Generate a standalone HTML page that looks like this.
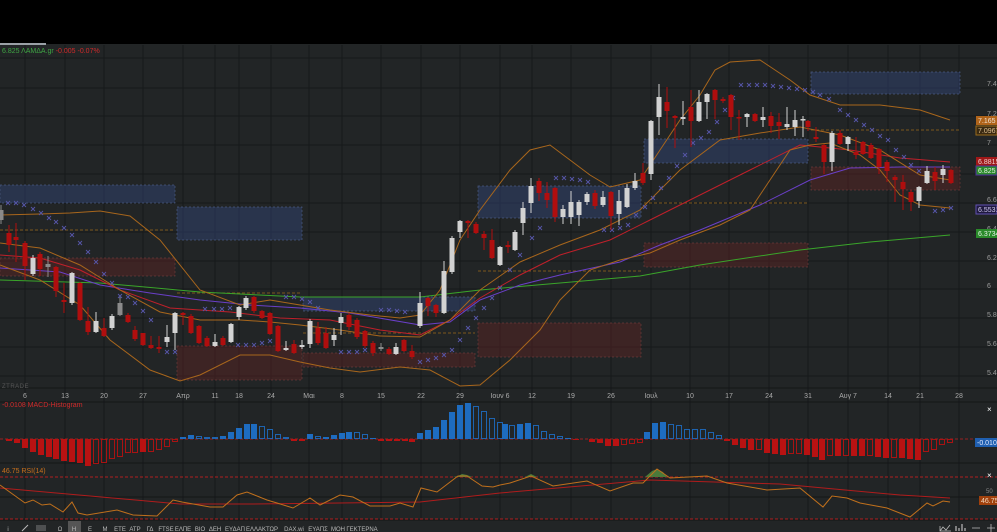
<!DOCTYPE html>
<html><head><meta charset="utf-8"><style>
html,body{margin:0;padding:0;background:#222526;width:997px;height:532px;overflow:hidden}
svg{display:block;font-family:"Liberation Sans","Noto Sans CJK SC",sans-serif}
</style></head><body>
<svg id="s" width="997" height="532" viewBox="0 0 997 532" xmlns="http://www.w3.org/2000/svg">
<rect x="0" y="0" width="997" height="532" fill="#222526"/>
<rect x="0" y="0" width="997" height="44" fill="#000"/>
<rect x="0" y="43" width="46" height="2" fill="#9aa0a6"/>
<g id="grid" stroke="#16191a" stroke-width="1"></g>
<g id="boxes"></g>
<g id="lines" fill="none" stroke-width="1"></g>
<g id="sar" stroke="#5656a8" stroke-width="0.9"></g>
<g id="candles"></g>
<g id="macd"></g>
<g id="rsi" fill="none"></g>
<text x="2" y="53" font-size="7" fill="#3fa544">6.825 ΛΑΜΔΑ.gr <tspan fill="#d02a2a">-0.005 -0.07%</tspan></text>
<text x="2" y="388" font-size="6" fill="#555" letter-spacing="0.5">ZTRADE</text>
<text x="2" y="407" font-size="7" fill="#d02a2a">-0.0108 MACD-Histogram</text>
<text x="2" y="473" font-size="7" fill="#c8701c">46.75 RSI(14)</text>
<g id="axis" font-size="7" fill="#aaa" text-anchor="middle"></g>
<g id="price" font-size="7" fill="#9a9a9a"></g>
<g font-size="7" fill="#fff">
<rect x="976" y="116" width="21" height="9" fill="#b0641a"/><text x="978" y="123" fill="#f0e0d0">7.165</text>
<rect x="976" y="126" width="21" height="9" fill="#3a2a12" stroke="#9a6a1a"/><text x="978" y="133" fill="#e0c090">7.0967</text>
<rect x="976" y="157" width="21" height="9" fill="#a01818"/><text x="978" y="164" fill="#f0d0d0">6.8815</text>
<rect x="976" y="166" width="21" height="9" fill="#2a8a2a" stroke="#5030a0"/><text x="978" y="173" fill="#e0f0e0">6.825</text>
<rect x="976" y="205" width="21" height="9" fill="#201a40" stroke="#6050b0"/><text x="978" y="212" fill="#d0c8f0">6.5531</text>
<rect x="976" y="229" width="21" height="9" fill="#2a8a2a"/><text x="978" y="236" fill="#e0f0e0">6.3734</text>
<rect x="975" y="438" width="22" height="9" fill="#1f5fb0"/><text x="977" y="445" fill="#e0e8ff">-0.0108</text>
<rect x="979" y="496" width="18" height="9" fill="#a0400c"/><text x="981" y="503" fill="#f0d8c0">46.75</text>
<text x="987" y="412" font-size="8">×</text><text x="987" y="478" font-size="8">×</text>
<text x="986" y="493" font-size="6" fill="#888">50</text>
</g>
<g id="tb" font-size="6" fill="#bbb" text-anchor="middle"></g>
</svg>
<script>
var NS="http://www.w3.org/2000/svg";
function el(p,t,a,txt){var e=document.createElementNS(NS,t);for(var k in a)e.setAttribute(k,a[k]);if(txt!=null)e.textContent=txt;document.getElementById(p).appendChild(e);return e;}
var vx=[25,65,104,143,183,215,239,271,309,342,381,421,460,500,532,571,611,651,690,729,769,808,848,888,920,959];
vx.forEach(function(x){el('grid','line',{x1:x,y1:45,x2:x,y2:520});});
[58,88,116,145,174,203,232,261,289,318,347,376].forEach(function(y){el('grid','line',{x1:0,y1:y,x2:997,y2:y});});
[388,402,463,497,520].forEach(function(y){el('grid','line',{x1:0,y1:y,x2:997,y2:y,stroke:"#141617"});});
var al=[["6",25],["13",65],["20",104],["27",143],["Απρ",183],["11",215],["18",239],["24",271],["Μαι",309],["8",342],["15",381],["22",421],["29",460],["Ιουν 6",500],["12",532],["19",571],["26",611],["Ιουλ",651],["10",690],["17",729],["24",769],["31",808],["Αυγ 7",848],["14",888],["21",920],["28",959]];
al.forEach(function(a){el('axis','text',{x:a[1],y:398},a[0]);});
[["7.4",86],["7.2",116],["7",145],["6.6",202],["6.4",231],["6.2",260],["6",288],["5.8",317],["5.6",346],["5.4",375]].forEach(function(a){el('price','text',{x:987,y:a[1]},a[0]);});
function box(x,y,w,h,c){var f=c=='b'?'rgba(52,72,125,0.45)':'rgba(95,35,35,0.45)',s=c=='b'?'#4a5a80':'#6a3a3a';el('boxes','rect',{x:x,y:y,width:w,height:h,fill:f,stroke:s,'stroke-dasharray':'2,2','stroke-width':0.7});}
box(0,185,175,18,'b');box(177,207,125,33,'b');box(0,258,175,18,'r');box(303,297,172,14,'b');box(177,346,125,34,'r');box(303,353,172,14,'r');
box(478,323,163,34,'r');box(478,186,163,32,'b');box(644,139,164,24,'b');box(644,243,164,24,'r');box(811,72,149,22,'b');box(811,167,149,23,'r');
[[0,175,230],[177,302,293],[303,475,333],[478,641,271],[644,808,203],[811,960,130]].forEach(function(d){el('boxes','line',{x1:d[0],x2:d[1],y1:d[2],y2:d[2],stroke:'#9a6a1a','stroke-dasharray':'3,2','stroke-width':0.8});});
function pl(g,pts,c,w){el(g,'polyline',{points:pts,stroke:c,'stroke-width':w||1,fill:'none'});}
pl('lines',"0,280 100,283 200,292 300,297 420,297 480,290 560,283 640,276 700,265 800,250 870,242 950,235","#3aa52a");
pl('lines',"0,268 60,272 100,285 150,293 200,300 250,305 300,308 350,313 420,325 450,322 480,300 520,285 560,275 620,262 660,245 700,230 760,205 810,180 850,168 900,167 950,167","#6a3fc8");
pl('lines',"0,255 40,258 80,270 120,290 170,308 230,312 280,318 330,320 380,330 420,335 450,320 480,298 520,275 560,255 610,240 650,220 700,195 750,170 800,145 850,150 900,158 950,162","#c0202a");
pl('lines',"0,215 40,214 70,213 100,211 130,216 160,240 200,290 240,305 270,300 300,305 330,310 370,315 400,318 420,315 440,290 460,240 480,210 510,170 530,150 550,145 570,160 590,175 610,187 640,180 660,150 680,120 700,95 715,70 730,62 760,60 790,80 810,95 840,105 880,105 920,110 950,120","#a8661c");
pl('lines',"0,243 40,248 80,265 120,290 160,312 200,320 240,320 270,322 300,325 340,330 380,336 420,337 450,320 480,290 520,262 560,245 600,230 640,210 680,170 720,140 760,133 800,127 840,135 880,150 920,175 950,180","#a8661c");
pl('lines',"0,265 40,280 80,305 110,340 150,370 180,381 200,375 240,355 270,355 300,362 330,368 360,372 400,367 430,370 460,386 480,385 510,360 540,330 560,300 590,270 620,260 650,253 680,240 720,225 750,210 770,180 790,150 810,145 830,143 860,155 880,170 900,195 920,205 950,208","#a8661c");
var sar=[[8,203],[16,203],[24,205],[33,209],[41,213],[49,218],[56,222],[64,228],[72,235],[80,243],[88,252],[96,262],[104,274],[112,283],[120,296],[128,297],[135,303],[143,311],[151,320],[167,352],[175,352],[205,309],[214,309],[222,309],[230,308],[238,345],[246,345],[254,345],[262,343],[270,341],[278,339],[286,297],[294,297],[302,299],[310,302],[318,308],[341,352],[349,352],[357,352],[365,350],[373,348],[381,310],[389,310],[397,311],[405,312],[420,362],[428,360],[436,358],[444,355],[452,350],[460,340],[468,328],[476,318],[484,308],[492,298],[500,288],[510,270],[520,255],[532,238],[540,228],[556,178],[564,178],[572,179],[580,180],[588,182],[604,230],[612,230],[620,228],[628,225],[636,215],[645,207],[653,198],[661,188],[669,178],[677,166],[685,155],[693,143],[701,138],[709,132],[717,122],[725,110],[733,98],[741,85],[749,85],[757,85],[765,85],[773,86],[781,87],[789,88],[797,89],[805,90],[813,92],[820,95],[829,99],[840,110],[848,115],[856,120],[864,125],[872,130],[880,136],[888,140],[896,150],[904,157],[911,165],[919,171],[935,211],[943,210],[951,208]];
sar.forEach(function(p){var x=p[0],y=p[1];el('sar','path',{d:'M'+(x-2)+' '+(y-2)+'L'+(x+2)+' '+(y+2)+'M'+(x+2)+' '+(y-2)+'L'+(x-2)+' '+(y+2)});});
var C=[[1,210,220,205,224,'g'],[9,233,245,225,252,'r'],[16,237,240,223,262,'r'],[25,243,266,241,280,'r'],[33,258,274,255,276,'w'],[40,254,269,252,276,'r'],[48,264,267,256,277,'g'],[56,267,291,266,297,'r'],[64,300,302,283,313,'r'],[72,273,303,272,305,'w'],[80,283,320,282,321,'r'],[88,321,332,307,335,'r'],[96,321,332,312,333,'w'],[104,328,336,318,337,'r'],[112,316,328,314,330,'w'],[120,303,315,297,316,'g'],[128,315,322,313,323,'r'],[135,330,339,326,341,'r'],[143,333,345,333,346,'r'],[151,345,348,336,349,'r'],[159,347,349,336,353,'r'],[167,337,342,325,347,'w'],[175,313,333,312,350,'w'],[183,313,315,312,325,'r'],[191,316,333,314,334,'r'],[199,326,343,325,344,'r'],[207,338,346,336,347,'r'],[215,342,346,334,347,'w'],[223,338,345,336,346,'r'],[231,324,342,323,343,'w'],[239,307,317,306,320,'w'],[246,298,308,296,310,'w'],[254,297,311,296,313,'r'],[262,311,318,310,319,'r'],[270,313,334,312,335,'r'],[278,326,351,325,352,'r'],[286,348,350,341,351,'w'],[294,344,353,340,354,'r'],[302,345,347,340,349,'w'],[310,321,344,319,348,'w'],[318,328,343,322,345,'r'],[326,333,348,327,349,'r'],[334,335,340,328,346,'w'],[341,317,323,313,335,'w'],[349,315,327,313,330,'r'],[357,320,337,318,339,'r'],[365,331,346,330,348,'r'],[373,343,353,341,356,'r'],[381,347,349,343,351,'g'],[389,349,354,347,355,'r'],[396,347,354,343,355,'w'],[404,340,351,339,352,'r'],[412,351,357,345,359,'r'],[420,303,326,292,328,'w'],[428,298,306,297,316,'r'],[436,305,313,304,317,'r'],[444,271,313,261,314,'w'],[452,238,272,236,274,'w'],[460,221,232,220,238,'w'],[468,221,223,220,238,'r'],[476,224,233,222,234,'r'],[484,234,238,231,250,'r'],[492,240,258,229,259,'r'],[500,247,265,246,266,'w'],[508,245,247,241,253,'r'],[515,232,250,230,251,'w'],[523,208,223,202,235,'w'],[531,186,203,178,213,'w'],[539,181,193,178,201,'r'],[547,193,200,182,208,'r'],[555,188,217,187,222,'r'],[563,209,217,205,224,'w'],[571,202,217,191,224,'w'],[579,202,215,200,226,'w'],[587,194,202,192,205,'w'],[595,193,206,190,209,'r'],[603,197,205,191,207,'w'],[611,192,216,191,230,'r'],[619,201,214,190,225,'w'],[627,188,207,184,208,'w'],[635,181,188,173,190,'w'],[643,173,183,163,185,'r'],[651,121,174,120,180,'w'],[659,97,117,84,135,'w'],[667,102,111,87,128,'r'],[675,116,118,115,148,'r'],[683,117,119,101,125,'w'],[691,107,121,90,147,'r'],[699,102,121,90,122,'w'],[707,94,102,93,119,'w'],[715,90,100,89,119,'r'],[723,99,101,97,103,'r'],[731,95,117,94,130,'r'],[739,117,118,110,140,'r'],[747,114,117,113,127,'w'],[755,114,121,113,122,'r'],[763,117,120,107,127,'w'],[771,116,126,112,133,'r'],[779,122,126,113,139,'r'],[787,124,127,107,130,'w'],[795,120,127,110,136,'w'],[803,119,120,116,137,'w'],[808,121,127,120,131,'r'],[816,137,139,127,142,'r'],[824,145,162,144,174,'r'],[832,133,162,131,171,'w'],[840,133,144,130,145,'r'],[848,137,144,136,151,'w'],[856,152,155,137,159,'r'],[863,142,154,141,155,'r'],[871,145,158,143,159,'r'],[879,149,167,148,174,'r'],[887,162,171,160,182,'r'],[895,177,180,175,202,'r'],[903,182,189,175,210,'r'],[911,192,202,190,211,'r'],[919,187,201,186,208,'w'],[927,171,183,166,184,'w'],[935,172,181,167,190,'r'],[943,169,175,165,183,'w'],[951,170,183,169,184,'r']];
C.forEach(function(c){var col=c[5]=='r'?'#b00e0e':(c[5]=='w'?'#d2d2d2':'#8a8a8a');
el('candles','line',{x1:c[0],x2:c[0],y1:c[3],y2:c[4],stroke:col,'stroke-width':1});
el('candles','rect',{x:c[0]-2.5,y:c[1],width:5,height:Math.max(1.5,c[2]-c[1]),fill:col});});
var Z=439;
el('macd','line',{x1:0,x2:997,y1:Z,y2:Z,stroke:'#c02020','stroke-dasharray':'3,2','stroke-width':0.8});
var M=[[9,441,1],[17,443,1],[25,448,1],[33,452,1],[41,455,1],[49,457,1],[56,459,1],[64,461,1],[72,462,1],[80,463,1],[88,466,1],[96,464,0],[104,463,0],[112,459,0],[120,457,0],[128,453,0],[135,453,0],[143,452,1],[151,452,0],[159,450,0],[167,447,0],[175,442,0],[183,437,1],[191,435,1],[199,436,0],[207,437,0],[215,437,0],[223,436,1],[231,432,1],[239,428,1],[247,424,1],[254,424,1],[262,426,0],[270,429,0],[278,434,0],[286,437,0],[294,441,1],[302,441,1],[310,434,1],[318,436,0],[326,437,1],[334,435,1],[342,433,1],[349,432,1],[357,432,0],[365,434,0],[373,438,1],[381,441,1],[389,441,1],[397,441,1],[405,441,1],[412,442,1],[420,433,1],[428,430,1],[436,427,1],[444,420,1],[452,412,1],[460,405,1],[468,403,1],[476,406,0],[484,411,0],[492,418,0],[500,422,0],[505,424,1],[512,425,0],[520,424,1],[528,423,1],[536,425,0],[544,431,0],[552,434,0],[560,436,0],[568,438,1],[576,439,1],[592,442,1],[600,443,1],[608,446,1],[616,446,1],[624,445,0],[632,444,0],[640,443,0],[647,432,1],[655,423,1],[663,422,1],[671,424,0],[679,425,0],[687,429,0],[695,429,0],[703,429,0],[711,432,0],[719,435,0],[727,441,1],[735,445,1],[743,448,1],[751,450,1],[759,450,0],[767,453,1],[775,454,1],[783,455,1],[791,454,0],[799,454,0],[807,455,1],[815,457,1],[822,460,1],[830,456,0],[838,456,1],[846,456,0],[854,456,1],[862,456,1],[870,456,0],[878,457,1],[886,458,1],[894,458,0],[902,458,1],[910,459,1],[918,460,1],[926,452,0],[934,450,0],[942,445,0],[950,443,0]];
M.forEach(function(m){var up=m[1]<Z,col=up?'#1e6cc0':'#b81212',y=Math.min(m[1],Z),h=Math.max(1,Math.abs(m[1]-Z));
if(m[2])el('macd','rect',{x:m[0]-3,y:y,width:6,height:h,fill:col});else el('macd','rect',{x:m[0]-2.5,y:y+0.5,width:5,height:h-1,fill:'none',stroke:col,'stroke-width':0.9});});
el('rsi','line',{x1:0,x2:997,y1:477,y2:477,stroke:'#b02020','stroke-dasharray':'3,2'});
el('rsi','line',{x1:0,x2:997,y1:519,y2:519,stroke:'#b02020','stroke-dasharray':'3,2'});
el('rsi','path',{d:'M453,477 L458,476 L462,474 L467,475 L472,477Z M525,477 L531,474 L537,477Z M645,477 L652,471 L657,469 L663,472 L667,477Z',fill:'#4a7a3a',stroke:'none'});
pl('rsi',"0,488 180,504 250,504 420,502 500,493 650,480 780,484 900,495 950,498","#b01c1c");
pl('rsi',"0,485 25,503 33,500 42,505 50,504 63,512 72,502 78,513 87,515 117,510 133,515 157,516 173,500 182,502 210,507 223,507 237,495 247,492 267,500 277,503 293,508 310,498 320,505 340,495 353,497 370,506 390,506 400,503 413,507 421,488 437,492 458,476 467,476 482,486 493,487 500,485 510,483 531,476 553,486 587,481 610,491 633,483 643,483 657,469 670,478 707,476 727,483 767,490 800,488 823,507 832,496 847,498 860,503 887,508 910,517 927,503 933,506 943,501 950,502","#c0701c");
el('tb','rect',{x:68,y:521,width:13,height:11,fill:'#555'});
[["i",8],["Ω",60],["H",74],["E",90],["M",105],["ETE",120],["ΑΤΡ",135],["ΓΔ",150],["FTSE",166],["ΕΛΠΕ",183],["ΒΙΟ",200],["ΔΕΗ",215],["ΕΥΔΑΠ",235],["ΕΛΛΑΚΤΩΡ",262],["DAX.wi",294],["ΕΥΑΠΣ",318],["ΜΟΗ",338],["ΓΕΚΤΕΡΝΑ",362]].forEach(function(a){el('tb','text',{x:a[1],y:531},a[0]);});
el('tb','line',{x1:22,y1:531,x2:28,y2:525,stroke:'#bbb'});
el('tb','path',{d:'M36 526H46M36 528H46M36 530H46',stroke:'#999','stroke-width':0.8,fill:'none'});
el('tb','path',{d:'M940 531L943 527L946 530L950 525M940 526V531H951',stroke:'#bbb',fill:'none','stroke-width':0.8});
el('tb','path',{d:'M956 531V526M959 531V528M962 531V524M965 531V528',stroke:'#bbb','stroke-width':1.2,fill:'none'});
el('tb','path',{d:'M972 528H980M987 528H995M991 524V532',stroke:'#bbb','stroke-width':0.8,fill:'none'});
</script>
</body></html>
